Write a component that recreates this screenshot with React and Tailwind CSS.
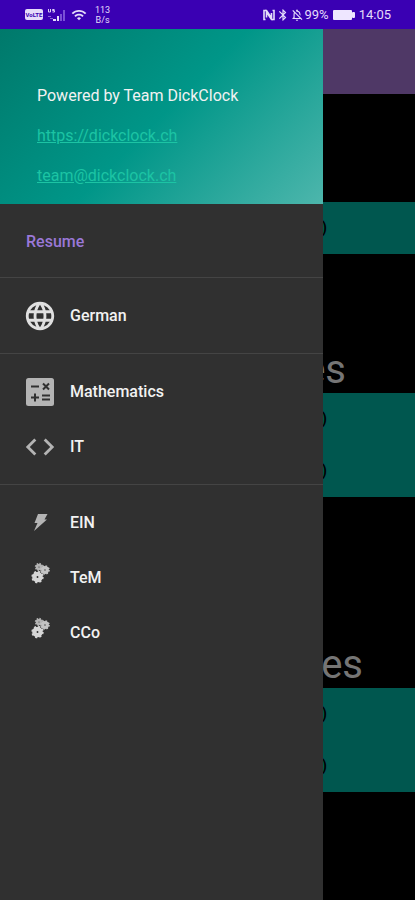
import { MdBluetooth, MdCode, MdLanguage, MdOutlineNotificationsOff, MdWifi } from 'react-icons/md'

function CalculatorIcon() {
  return (
    <svg viewBox="0 0 28 28" className="size-7">
      <rect width="28" height="28" rx="2.5" fill="#b4b4b4" />
      <path
        d="M5 8.500h8M5 19.500h8M9 15.500v8M16 17.500h8M16 21.500h8M17 5.500l6 6M23 5.500l-6 6"
        fill="none"
        stroke="#303030"
        strokeWidth="2"
      />
    </svg>
  )
}

function BoltIcon() {
  return (
    <svg viewBox="0 0 28 28" className="size-7" fill="#b4b4b4">
      <path d="M12 5h9.500l-3 5.500h2.500L8 22l3.500-8H8.500z" />
    </svg>
  )
}

// one cog: dashed ring for the teeth, solid ring for the body
function Cog({ cx, cy, r, shade }) {
  const tooth = (2 * Math.PI * r) / 16
  return (
    <g fill="none" stroke={shade}>
      <circle cx={cx} cy={cy} r={r} strokeWidth="2" strokeDasharray={`${tooth} ${tooth}`} />
      <circle cx={cx} cy={cy} r={r * 0.6} strokeWidth={r * 0.84} />
    </g>
  )
}

function CogsIcon() {
  return (
    <svg viewBox="0 0 28 28" className="size-7 overflow-visible">
      <Cog cx={13} cy={3} r={3.2} shade="#b4b4b4" />
      <Cog cx={19} cy={6} r={3.8} shade="#c4c4c4" />
      <Cog cx={11.5} cy={13} r={5.2} shade="#d6d6d6" />
    </svg>
  )
}

function SignalIcon() {
  return (
    <svg viewBox="0 0 20 14" className="w-5 h-3.5">
      <g fill="none" stroke="#d9cdf5" strokeWidth="1">
        <path d="M1.500 1v3h2V1M7.500 1.500h-2v1h2v1.500h-2" />
        <path d="M1 8.500h3M3 10.500h3" opacity="0.5" />
      </g>
      <path d="M6 13v-2h3v2zM10 13V8h2v5z" fill="#e5dcfa" />
      <path d="M13 13V6h2v7zM16 13V2h2v11z" fill="#7a50d6" />
    </svg>
  )
}

function NfcIcon() {
  return (
    <svg viewBox="0 0 14 14" className="size-3.5" fill="none" stroke="#e5dcfa" strokeWidth="1.6">
      <path d="M3.500 11.500H2V2.500h2.500l5 7.500V5" />
      <path d="M10.500 2.500H12v9H9.500L4.500 4v5.500" />
    </svg>
  )
}

function BatteryIcon() {
  return (
    <svg viewBox="0 0 22 10" className="w-[22px] h-2.5" fill="#eee6ff">
      <rect width="19" height="10" rx="1" />
      <rect x="19" y="2" width="3" height="6" rx="1" />
    </svg>
  )
}

function StatusBar() {
  return (
    <header className="h-[29px] bg-[#3a00b3] text-[#e5dcfa] flex items-center justify-between pl-[25px] pr-6">
      <div className="flex items-center gap-1">
        <span className="bg-[#e5dcfa] text-[#3a00b3] rounded-xs text-[6px] leading-[11px] font-bold w-[18px] text-center">VoLTE</span>
        <SignalIcon />
        <MdWifi className="size-4" />
        <div className="text-[9px] leading-[10px] text-center ml-1">
          <div>113</div>
          <div>B/s</div>
        </div>
      </div>
      <div className="flex items-center text-[13px]">
        <NfcIcon />
        <MdBluetooth className="size-3.5" />
        <MdOutlineNotificationsOff className="size-3.5" />
        <span>99%</span>
        <span className="mx-1"><BatteryIcon /></span>
        <span>14:05</span>
      </div>
    </header>
  )
}

const SUBJECTS = [
  [{ label: 'German', icon: <MdLanguage className="size-[34px] text-[#e0e0e0]" /> }],
  [
    { label: 'Mathematics', icon: <CalculatorIcon /> },
    { label: 'IT', icon: <MdCode className="size-[34px] text-[#b4b4b4]" /> },
  ],
  [
    { label: 'EIN', icon: <BoltIcon /> },
    { label: 'TeM', icon: <CogsIcon /> },
    { label: 'CCo', icon: <CogsIcon /> },
  ],
]

function Drawer() {
  return (
    <nav className="absolute inset-y-0 left-0 w-7/9 bg-[#303030] text-[#f2f2f2]">
      <div className="h-[175px] pl-[37px] pt-[57px] flex flex-col items-start gap-5 text-base leading-5 bg-linear-[135deg] from-[#00796b] via-[#009688] to-[#4db6ac]">
        <p>Powered by Team DickClock</p>
        <a href="https://dickclock.ch" className="text-[#1cc4a4] underline">https://dickclock.ch</a>
        <a href="mailto:team@dickclock.ch" className="text-[#1cc4a4] underline">team@dickclock.ch</a>
      </div>
      <div className="pt-[10px] pb-2">
        <button className="h-[55px] w-full pl-[26px] text-left font-medium text-[#9a78d8]">Resume</button>
      </div>
      {SUBJECTS.map((group, i) => (
        <div key={i} className="py-[10px] border-t border-[#444444]">
          {group.map(s => (
            <button key={s.label} className="h-[55px] w-full pl-5 flex items-center gap-[10px] font-medium">
              <span className="w-10 flex justify-center">{s.icon}</span>
              {s.label}
            </button>
          ))}
        </div>
      ))}
    </nav>
  )
}

function Card({ rows }) {
  return (
    <div className="bg-[#00574f] text-black text-base font-medium">
      {Array.from({ length: rows }, (_, i) => (
        <div key={i} className="h-[52px] pr-[88px] flex items-center justify-end">)</div>
      ))}
    </div>
  )
}

// dimmed page behind the open drawer
function Page() {
  return (
    <main className="flex-1 bg-black">
      <div className="h-[65px] bg-[#4f3866]" />
      <div className="pt-[108px]"><Card rows={1} /></div>
      <h2 className="mt-[92px] pr-[69px] text-right text-[40px] leading-[47px] text-[#757575]">es</h2>
      <Card rows={2} />
      <h2 className="mt-[144px] pr-[52px] text-right text-[40px] leading-[47px] text-[#757575]">es</h2>
      <Card rows={2} />
    </main>
  )
}

export default function App() {
  return (
    <div className="min-h-screen flex flex-col font-[Roboto,sans-serif]">
      <StatusBar />
      <div className="relative flex-1 flex">
        <Page />
        <Drawer />
      </div>
    </div>
  )
}
